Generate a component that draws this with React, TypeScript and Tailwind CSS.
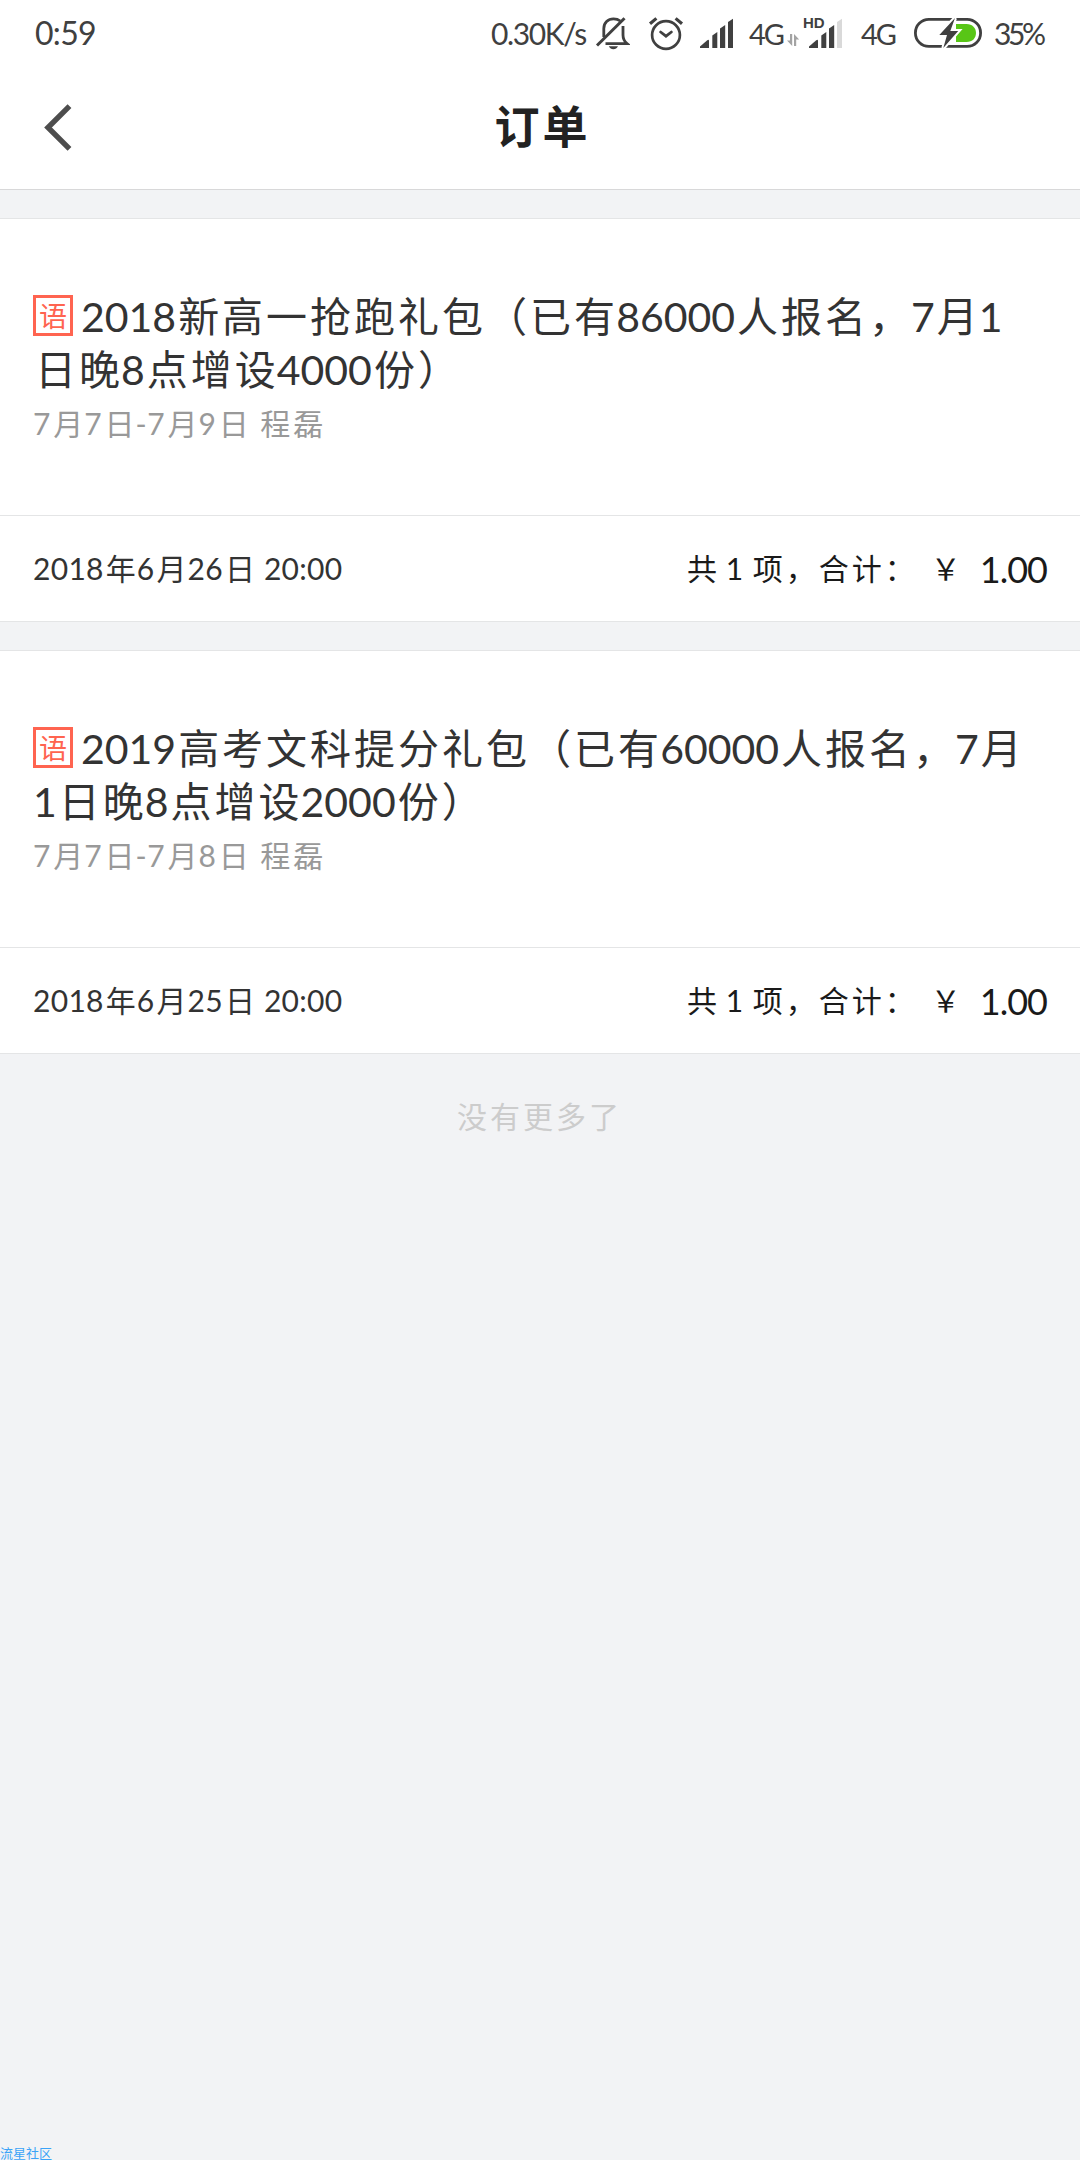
import React from 'react';

interface Order {
  id: number;
  subject: string;
  title: string[];
  meta: string;
  date: string;
  count: number;
  total: string;
}

const ORDERS: Order[] = [
  {
    id: 1,
    subject: '语',
    title: ['2018新高一抢跑礼包（已有86000人报名，7月1', '日晚8点增设4000份）'],
    meta: '7月7日-7月9日 程磊',
    date: '2018年6月26日 20:00',
    count: 1,
    total: '1.00',
  },
  {
    id: 2,
    subject: '语',
    title: ['2019高考文科提分礼包（已有60000人报名，7月', '1日晚8点增设2000份）'],
    meta: '7月7日-7月8日 程磊',
    date: '2018年6月25日 20:00',
    count: 1,
    total: '1.00',
  },
];

/**
 * 中英混排文字，中文部分加字间距
 */
const Mixed: React.FC<{ text: string }> = ({ text }) => (
  <>
    {text.split(/([\u3000-\uffef]+)/).map((part, i) =>
      i % 2 === 1 ? (
        <span key={i} className="mr-[-2px] ml-[2px] tracking-[3px]">{part}</span>
      ) : (
        part
      )
    )}
  </>
);

const SignalIcon: React.FC<{ last: string }> = ({ last }) => (
  <svg width="33" height="30" viewBox="0 0 33 30" fill="#404040" className="block">
    <path d="M0 30V28.5L7 22.5Q9 21 9 23V30Z" />
    <path d="M12.3 30V17.5L17.3 14V30Z" />
    <path d="M20 30V10.5L25.2 7V30Z" />
    <path d="M28 30V4L33 .8V30Z" fill={last} />
  </svg>
);

const BellOffIcon = () => (
  <svg width="36" height="36" viewBox="0 0 36 36" fill="none" stroke="#404040" strokeWidth="2.8" className="shrink-0">
    <path d="M9.8 22V13.5C9.8 7.5 14 3.8 19.5 3.8C22.2 3.8 24.5 4.6 26.3 6" />
    <path d="M29 11V20C29 23.5 30.5 26.5 33 28.6H11.5" />
    <path d="M3 30.5L30.5 3.2" strokeWidth="3" />
    <path d="M14.8 31.2H24Q22.5 34.2 19.4 34.2T14.8 31.2Z" fill="#404040" stroke="none" />
  </svg>
);

const AlarmIcon = () => (
  <svg width="40" height="38" viewBox="0 0 40 38" fill="none" stroke="#404040" strokeLinecap="round" className="shrink-0">
    <circle cx="20" cy="21" r="13.9" strokeWidth="2.7" />
    <path d="M14.6 18L20 22.2L25.4 18" strokeWidth="2.8" />
    <path d="M4 9.8L10.4 4.4M29.6 4.4L36 9.8" strokeWidth="3.2" strokeLinecap="butt" />
  </svg>
);

const BatteryIcon = () => (
  <svg width="70" height="32" viewBox="0 0 70 32" className="shrink-0">
    <rect x="2.4" y="2.4" width="65.2" height="27" rx="13.5" fill="none" stroke="#404040" strokeWidth="2.8" />
    <path d="M43 7H53.5C59.5 7 63 11 63 16S59.5 25 53.5 25H43Z" fill="#58c616" />
    <path
      d="M42 1L26.3 18H34L30.3 31L45.2 14H37.3Z"
      fill="#404040"
      stroke="#fff"
      strokeWidth="4"
      paintOrder="stroke"
    />
  </svg>
);

const StatusBar = () => (
  <div className="flex h-[66px] items-center pl-[35px] text-[32px] leading-none text-[#404040] whitespace-nowrap">
    <span className="w-[456px] tracking-[-0.7px]">0:59</span>
    <span className="w-[103px] text-[30px] tracking-[-1.4px]">0.30K/s</span>
    <BellOffIcon />
    <div className="ml-4 flex">
      <AlarmIcon />
    </div>
    <div className="ml-[14px]">
      <SignalIcon last="#404040" />
    </div>
    <span className="ml-[16px] w-[38px] text-[29px] tracking-[-2px]">4G</span>
    <svg width="13" height="12" viewBox="0 0 13 12" fill="#a3a3a3" className="mt-[14px] shrink-0">
      <path d="M3 0H5.2V12L0 6.5H3Z" />
      <path d="M7 12V0L12.2 5.5H9.2V12Z" />
    </svg>
    <div className="relative ml-[9px]">
      <SignalIcon last="#d9d9d9" />
      <span className="absolute top-[-2px] left-[-6px] bg-white pr-px font-['Liberation_Sans',sans-serif] text-[15px] leading-[14px] font-bold">HD</span>
    </div>
    <span className="ml-[19px] w-[52px] text-[29px] tracking-[-2px]">4G</span>
    <BatteryIcon />
    <span className="ml-[11px] text-[30px] tracking-[-3.4px]">35%</span>
  </div>
);

const OrderCard: React.FC<{ order: Order }> = ({ order }) => (
  <section className="flex h-[404px] flex-col border-y border-[#e4e5e6] bg-white">
    <div className="flex-1 px-[33px] pt-[71px]">
      <h2 className="text-[41px] leading-[53px] text-[#333] whitespace-nowrap">
        <div className="flex h-[53px]">
          <span className="mt-[5px] mr-[8px] flex h-[41px] w-10 shrink-0 items-center justify-center border-3 border-[#ff6450] text-[28px] leading-none text-[#ff6450]">
            {order.subject}
          </span>
          <span>
            <Mixed text={order.title[0]} />
          </span>
        </div>
        <div className="h-[53px]">
          <Mixed text={order.title[1]} />
        </div>
      </h2>
      <p className="h-[53px] text-[30px] leading-[55px] tracking-[0.8px] text-[#999]">
        <Mixed text={order.meta} />
      </p>
    </div>
    <div className="flex h-[106px] items-center justify-between border-t border-[#e4e5e6] px-[33px] text-[30px] whitespace-nowrap">
      <span className="tracking-[0.3px] text-[#333]">
        <Mixed text={order.date} />
      </span>
      <div className="flex items-center text-[#1a1a1a]">
        <span>
          <Mixed text={`共 ${order.count} 项，合计：`} />
        </span>
        <span className="ml-[15px] text-[30px]">￥</span>
        <span className="ml-[19px] text-[36px] tracking-[-1px]">{order.total}</span>
      </div>
    </div>
  </section>
);

const App: React.FC = () => {
  return (
    <div className="relative h-[2160px] w-[1080px] overflow-hidden bg-[#f2f3f5] font-['Lato','Noto_Sans_CJK_SC',sans-serif]">
      {/* 顶部栏 */}
      <header className="h-[190px] border-b border-[#d8d8d9] bg-white">
        <StatusBar />
        <div className="grid h-[123px] grid-cols-[1fr_auto_1fr] items-center">
          <button className="pl-[44px]">
            <svg width="28" height="47" viewBox="0 0 28 47" fill="none" stroke="#4d4d4d" strokeWidth="5.4" className="block">
              <path d="M25.5 2.2L4 23.5L25.5 44.8" />
            </svg>
          </button>
          <h1 className="pl-[5px] text-[45px] leading-none font-bold tracking-[3px] text-[#222]">订单</h1>
          <span />
        </div>
      </header>

      {/* 订单列表 */}
      <main className="flex flex-col gap-7 pt-7">
        {ORDERS.map((order) => (
          <OrderCard key={order.id} order={order} />
        ))}
        <p className="pt-[12px] pr-[5px] text-center text-[30px] leading-[44px] text-[#ccc]">
          <Mixed text="没有更多了" />
        </p>
      </main>

      {/* 水印 */}
      <span className="absolute bottom-0 left-0 text-[13px] leading-[14px] text-[#3ba3f7]">流星社区</span>
    </div>
  );
};

export default App;
